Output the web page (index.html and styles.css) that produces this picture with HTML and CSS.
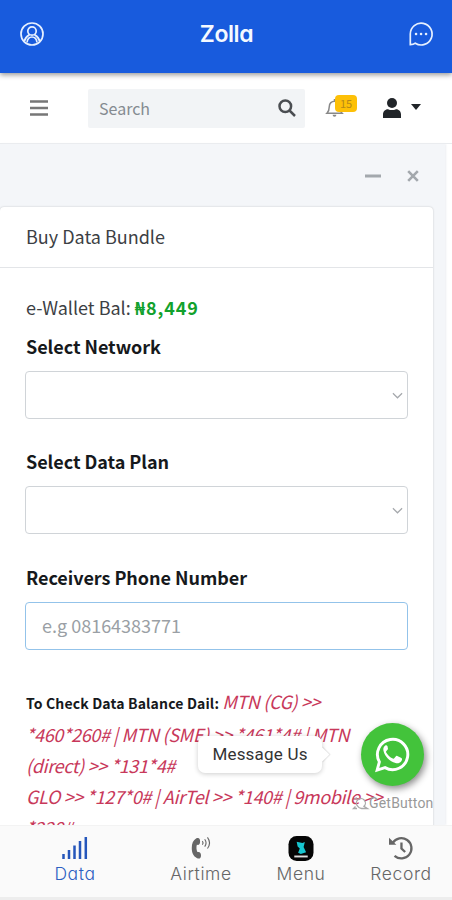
FILE: index.html
```html
<!DOCTYPE html>
<html lang="en">
<head>
<meta charset="utf-8">
<title>Zolla</title>
<link rel="stylesheet" href="styles.css">
</head>
<body>
<div class="app">
  <header class="appbar">
    <svg class="appbar-icon" viewBox="0 0 24 24"><circle cx="12" cy="12" r="11"/><circle cx="12" cy="9" r="4.200"/><path d="M4.200 19.500C5 15.500 8 13.700 9.600 12.600M19.800 19.500C19 15.500 16 13.700 14.400 12.600M7 20.500c.4-3.500 2-5.500 5-5.500s4.600 2 5 5.500"/></svg>
    <h1 class="brand">Zolla</h1>
    <svg class="appbar-icon" viewBox="0 0 24 24"><path d="M1.300 22.700V12A10.900 10.900 0 1 1 6.300 21.200C5 22.300 3.300 22.700 1.300 22.700z"/><path class="dots" d="M7 12h.1M12 12h.1M17 12h.1"/></svg>
  </header>
  <nav class="navbar">
    <svg class="burger" viewBox="0 0 18 16"><path d="M0 1.500h18M0 8h18M0 14.500h18"/></svg>
    <div class="search"><span>Search</span><svg viewBox="0 0 18 18"><circle cx="7.300" cy="7.300" r="5.800"/><path d="M11.500 11.500l5.500 5.500"/></svg></div>
    <div class="bell"><svg viewBox="0 0 18 20"><path d="M1 15.500c2-2 2.500-4 2.500-7C3.500 5 6 2.800 9 2.800S14.500 5 14.500 8.500c0 3 .5 5 2.500 7zM9 .5v2.300"/><path class="clapper" d="M7 17.200h4a2 2 0 0 1-4 0z"/></svg><span class="badge">15</span></div>
    <div class="account"><svg viewBox="0 0 18 20"><circle cx="9" cy="5" r="5"/><path d="M0 20v-3.500c0-3 2-5.300 5-5.300 2.500 1.200 5.500 1.200 8 0 3 0 5 2.300 5 5.300V20z"/></svg><i class="caret"></i></div>
  </nav>
  <main class="content">
    <div class="tools">
      <svg class="minus" viewBox="0 0 16 4"><path d="M0 2h16"/></svg>
      <svg class="close" viewBox="0 0 12 12"><path d="M1.200 1.200l9.600 9.600M10.800 1.200l-9.600 9.600"/></svg>
    </div>
    <section class="card">
      <h2 class="card-title">Buy Data Bundle</h2>
      <div class="card-body">
        <p class="balance">e-Wallet Bal: <b>₦8,449</b></p>
        <div class="label">Select Network</div>
        <div class="field"><svg viewBox="0 0 12 7"><path d="M1 1l5 5 5-5"/></svg></div>
        <div class="label">Select Data Plan</div>
        <div class="field second"><svg viewBox="0 0 12 7"><path d="M1 1l5 5 5-5"/></svg></div>
        <div class="label">Receivers Phone Number</div>
        <div class="field active"><span>e.g 08164383771</span></div>
        <div class="codes">
          <div><b>To Check Data Balance Dail:</b> <i class="first">MTN (CG) &gt;&gt;</i></div>
          <div><i>*460*260# | MTN (SME) &gt;&gt; *461*4# | MTN</i></div>
          <div><i>(direct) &gt;&gt; *131*4#</i></div>
          <div><i>GLO &gt;&gt; *127*0# | AirTel &gt;&gt; *140# | 9mobile &gt;&gt;</i></div>
          <div><i>*228#</i></div>
        </div>
      </div>
    </section>
  </main>
  <footer class="tabs">
    <a class="tab selected"><svg viewBox="0 0 26 24"><path d="M1.500 18v5M7 14v9M12.500 9.500V23M18 5v18M23.800 1v22"/></svg><span>Data</span></a>
    <a class="tab airtime"><svg viewBox="0 0 22 26"><path class="solid" d="M6 2.500C9 1.500 10 3 10 6s-1 4-3.500 3.600c-.7 2.500-.6 5.200.6 7.800C9.500 16.700 11 18 11 21s-1.500 4-4.200 3C2.500 22 1 18 1 13S2.500 4.500 6 2.500z"/><path class="waves" d="M12.500 5.500q1.500 2 0 4M15 3.500q3 4 0 8M18 1.500q4.500 6 0 12"/></svg><span>Airtime</span></a>
    <a class="tab menu"><svg viewBox="0 0 26 26"><rect width="26" height="26" rx="8.500"/><path class="mark" d="M8.500 6l6 1.200 2.500-1-1.300 5.300 2.600 5.500-5.500 1.600-2.800-1.200 1.700-4.400L9.500 11z"/><path class="strip" d="M6 21.300h14"/></svg><span>Menu</span></a>
    <a class="tab record"><svg viewBox="0 0 26 26"><path d="M4 7.500A11 11 0 1 1 6 21.500M13.500 7v6.500l4 3.800"/><path class="arrow" d="M0 2v7.500h8z"/></svg><span>Record</span></a>
  </footer>
  <div class="tooltip">Message Us</div>
  <div class="whatsapp"><svg viewBox="0 0 36 36"><path d="M2.200 34l2.300-8.400A15.600 15.600 0 1 1 10.300 31.500z"/><path class="phone" d="M12.900 9.500c-.6-1.200-1.400-1.100-2-.9-1.800 1.200-2.800 3.300-2.200 5.500 1.500 6 6.300 11 12.400 12.700 2.700.8 5.600-.4 6.500-2.800.4-1.300.3-2-.4-2.500l-4.300-2c-.7-.3-1.100-.1-1.600.5l-1.500 1.900c-.5.5-.8.5-1.500.2-3-1.300-5.300-3.500-6.800-6.200-.3-.6-.2-1 .2-1.400l1.400-1.700c.4-.5.3-1 .1-1.500z"/></svg></div>
  <div class="getbutton"><svg viewBox="0 0 16 14"><path d="M1 3.500A4 4 0 0 1 4 2M2.500 10.500L.5 12.500H4M4.500 10A4.500 4.500 0 1 1 11 10.300l3.500 2.200H8.500A5 5 0 0 1 4.500 10z"/></svg><span>GetButton</span></div>
</div>
</body>
</html>
```
FILE: styles.css
```css
* { box-sizing: border-box; }
body { margin: 0; font-family: "Noto Sans CJK SC", "Noto Sans", sans-serif; background: #fff; }
svg { display: block; fill: none; overflow: visible; flex: none; }
h1, h2, p { margin: 0; font-weight: 400; }
.app { position: relative; width: 452px; height: 900px; overflow: hidden; display: flex; flex-direction: column; }

.appbar { height: 73px; flex: none; background: #185bdd; display: flex; align-items: center; justify-content: space-between; padding: 0 19px 6px 20px; box-shadow: 0 2px 5px rgba(0,0,0,.4); z-index: 2; }
.appbar-icon { width: 24px; height: 24px; stroke: #e6f0ff; stroke-width: 1.700; }
.dots { stroke-width: 2.500; stroke-linecap: round; }
.brand { font: 600 23px/30px Inter, sans-serif; font-feature-settings: "cv11"; letter-spacing: -.4px; color: #f4f9ff; }

.navbar { height: 71px; flex: none; background: #fff; display: flex; align-items: center; padding: 0 30px; border-bottom: 1px solid #e9ebee; }
.burger { width: 18px; height: 16px; stroke: #777; stroke-width: 2.500; }
.search { width: 217px; height: 39px; margin-left: 40px; background: #f2f4f6; border-radius: 2px; display: flex; align-items: center; justify-content: space-between; padding: 0 9px 0 11px; font-size: 16px; color: #858b91; }
.search svg { width: 18px; height: 18px; stroke: #4b4e52; stroke-width: 2.500; }
.bell { position: relative; margin-left: 21px; width: 32px; height: 20px; }
.bell svg { width: 17px; height: 20px; stroke: #888; stroke-width: 1.600; }
.bell .clapper { fill: #888; stroke: none; }
.badge { position: absolute; left: 9px; top: -3px; width: 22px; height: 17px; border-radius: 4px; background: #fdc007; color: #b58a18; font-size: 11px; line-height: 17px; text-align: center; }
.account { display: flex; margin-left: 25px; gap: 10px; align-items: center; }
.account svg { width: 18px; height: 20px; fill: #212529; }
.caret { margin-top: -2px; border: 5.500px solid transparent; border-top: 6px solid #212529; border-bottom: 0; }

.content { flex: 1; min-height: 0; overflow: hidden; width: 445px; background: #f4f6f9; box-shadow: 1px 0 2px #eceef2; }
.tools { height: 63px; display: flex; justify-content: flex-end; align-items: center; padding: 1px 26px 0 0; gap: 26px; }
.minus { width: 16px; height: 4px; stroke: #a3a8ad; stroke-width: 3; }
.close { width: 12px; height: 12px; stroke: #a3a8ad; stroke-width: 2.600; }
.card { width: 433px; height: 640px; background: #fff; border-radius: 4px; box-shadow: 0 0 2px rgba(0,0,0,.22); }
.card-title { height: 61px; border-bottom: 1px solid #e3e5e8; padding-left: 26px; font-size: 18px; line-height: 59px; color: #3c4044; }
.card-body { padding: 22px 25px 0 25px; }
.balance { font-size: 18px; line-height: 34px; height: 37px; padding-left: 1px; color: #3c4044; }
.balance b { color: #12a12c; letter-spacing: .9px; }
.label { font-size: 18px; font-weight: 700; letter-spacing: -.04px; line-height: 34px; height: 44px; padding: 2px 0 0 1px; color: #16191c; }
.field { height: 48px; border: 1px solid #d0d4d8; border-radius: 4px; margin-bottom: 23px; display: flex; align-items: center; justify-content: flex-end; padding-right: 4px; }
.field.second { margin-bottom: 24px; }
.field svg { width: 11px; height: 7px; stroke: #a5a8ac; stroke-width: 1.300; }
.field.active { justify-content: flex-start; padding: 0 0 2px 16px; border-color: #93c3ea; font-size: 18px; color: #9a9fa5; }
.codes { margin-top: 36px; padding-left: 1px; color: #c8385a; font-size: 18px; line-height: 31px; white-space: nowrap; }
.codes i { letter-spacing: -.35px; }
.codes .first { margin-left: -1px; }
.codes b { font-size: 14px; letter-spacing: .15px; color: #16191c; }

.tabs { height: 75px; flex: none; z-index: 1; background: #fafafa; border-top: 1px solid #f3f3f3; border-bottom: 3px solid #ededed; display: grid; grid-template-columns: 100px 100px 100px 100px; padding: 10px 0 0 51px; }
.tab { display: flex; flex-direction: column; align-items: center; font: 300 17.500px/20px Inter, sans-serif; font-feature-settings: "cv11"; letter-spacing: .6px; color: #666; }
.tab svg { width: 26px; height: 24px; margin-bottom: 4px; stroke: #666; stroke-width: 2.500; }
.tab.selected { color: #2c60c2; width: 48px; }
.tab.selected svg { stroke: #2556bb; }
.tab .solid { fill: #666; stroke: none; }
.tab .waves { stroke-width: 1.200; }
.tab.menu svg { width: 26px; height: 25px; margin-bottom: 3px; fill: #050505; stroke: none; }
.tab .mark { fill: #17c5cf; }
.tab .strip { stroke: #ddd; stroke-width: 2; }
.tab .arrow { fill: #666; stroke: none; }

.tooltip { position: absolute; z-index: 3; left: 198px; top: 736px; width: 124px; height: 37px; border-radius: 7px; background: #fff; box-shadow: 0 1px 5px rgba(0,0,0,.2); font: 400 17px/36px Roboto, sans-serif; letter-spacing: .2px; text-align: center; color: #333; }
.tooltip::after { content: ""; position: absolute; right: -5px; top: 13px; width: 11px; height: 11px; background: #fff; transform: rotate(45deg); box-shadow: 1px -1px 1px rgba(0,0,0,.1); }
.whatsapp { position: absolute; z-index: 3; left: 361px; top: 723px; width: 63px; height: 63px; border-radius: 50%; background: #43c33b; box-shadow: 2px 3px 7px rgba(0,0,0,.45); display: grid; place-items: center; }
.whatsapp svg { width: 35px; height: 35px; stroke: #fff; stroke-width: 3; }
.whatsapp .phone { fill: #fff; stroke: none; }
.getbutton { position: absolute; z-index: 3; left: 353px; top: 795px; display: flex; align-items: center; font: 400 14px/16px Roboto, sans-serif; color: #999; letter-spacing: .2px; }
.getbutton svg { width: 16px; height: 14px; stroke: #aaa; stroke-width: 1.300; }
```
